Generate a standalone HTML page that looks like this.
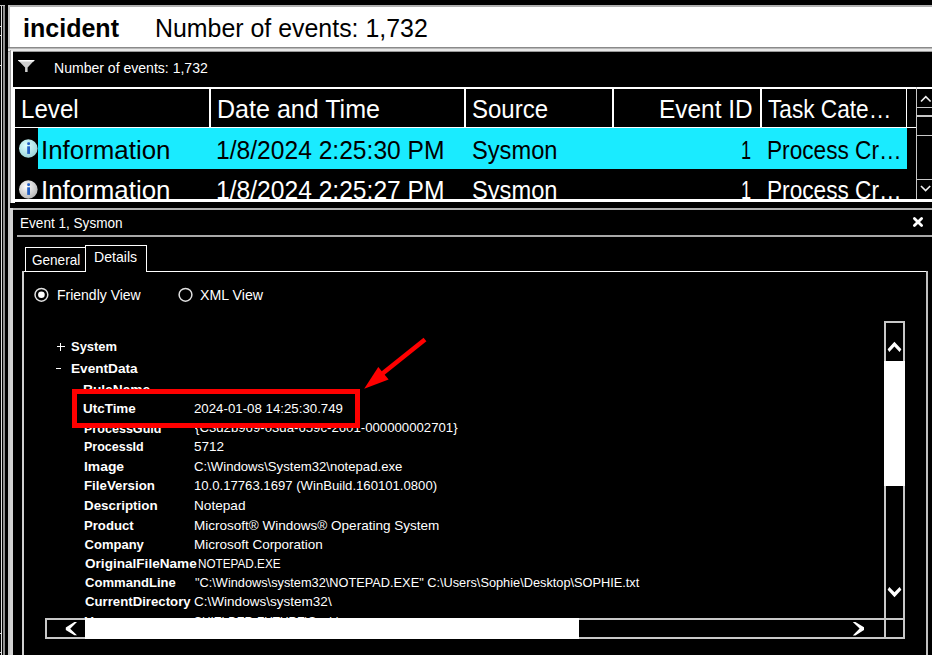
<!DOCTYPE html>
<html><head><meta charset="utf-8"><title>Event Viewer</title>
<style>
html,body{margin:0;padding:0;background:#000;}
body{width:932px;height:655px;overflow:hidden;position:relative;font-family:"Liberation Sans",sans-serif;}
.b{position:absolute;box-sizing:content-box;}
.t{position:absolute;white-space:nowrap;transform-origin:0 0;font-family:"Liberation Sans",sans-serif;}
svg.b{overflow:visible;}
</style></head><body>
<div class="b" style="left:1px;top:5px;width:1px;height:650px;background:#e0e0e0;"></div>
<div class="b" style="left:0px;top:26px;width:2px;height:1px;background:#e0e0e0;"></div>
<div class="b" style="left:0px;top:35px;width:2px;height:1px;background:#e0e0e0;"></div>
<div class="b" style="left:0px;top:65px;width:2px;height:1px;background:#e0e0e0;"></div>
<div class="b" style="left:0px;top:633px;width:2px;height:1px;background:#e0e0e0;"></div>
<div class="b" style="left:0px;top:652px;width:2px;height:1px;background:#e0e0e0;"></div>
<div class="b" style="left:3px;top:5px;width:2px;height:650px;background:#909090;"></div>
<div class="b" style="left:0px;top:5px;width:5px;height:1px;background:#c0c0c0;"></div>
<div class="b" style="left:8px;top:5px;width:924px;height:1.5px;background:#b0b0b0;"></div>
<div class="b" style="left:8px;top:5px;width:2px;height:650px;background:#c4c4c4;"></div>
<div class="b" style="left:9.5px;top:6.5px;width:922.5px;height:40.5px;background:#ffffff;"></div>
<div class="t" style="left:22.87px;top:15.20px;font-size:26px;line-height:26px;font-weight:bold;color:#000;transform:scaleX(0.9633)">incident</div>
<div class="t" style="left:154.61px;top:16.20px;font-size:25px;line-height:25px;font-weight:normal;color:#000;transform:scaleX(0.9963)">Number of events: 1,732</div>
<div class="b" style="left:8px;top:47px;width:924px;height:1px;background:#8a8a8a;"></div>
<div class="b" style="left:8px;top:48px;width:924px;height:1px;background:#b8b8b8;"></div>
<div class="b" style="left:8px;top:49px;width:924px;height:1.5px;background:#e8e8e8;"></div>
<div class="b" style="left:8px;top:50.5px;width:924px;height:1.5px;background:#9a9a9a;"></div>
<div class="b" style="left:10px;top:50px;width:1.3px;height:152.5px;background:#a0a0a0;"></div>
<div class="b" style="left:11.3px;top:50.5px;width:1.9px;height:152px;background:#ffffff;"></div>
<div class="b" style="left:13px;top:86.5px;width:2px;height:116px;background:#ffffff;"></div>
<svg class="b" style="left:17px;top:59px" width="19" height="14" viewBox="0 0 19 14"><path d="M0.9 0.9 H17.7 L10.6 8.6 V12.9 H8.1 V8.6 Z" fill="#cfcfcf"/><path d="M0.9 0.9 H17.7 L16.6 2.6 H2 Z" fill="#ffffff"/></svg>
<div class="t" style="left:54.46px;top:60.20px;font-size:15px;line-height:15px;font-weight:normal;color:#fff;transform:scaleX(0.9362)">Number of events: 1,732</div>
<div class="b" style="left:12px;top:86.5px;width:920px;height:2.3px;background:#ffffff;"></div>
<div class="b" style="left:208.5px;top:87px;width:2px;height:40px;background:#ffffff;"></div>
<div class="b" style="left:463.5px;top:87px;width:2px;height:40px;background:#ffffff;"></div>
<div class="b" style="left:611.5px;top:87px;width:2px;height:40px;background:#ffffff;"></div>
<div class="b" style="left:759.5px;top:87px;width:2px;height:40px;background:#ffffff;"></div>
<div class="b" style="left:905.5px;top:87px;width:1.5px;height:40px;background:#ffffff;"></div>
<div class="b" style="left:13px;top:126.5px;width:903px;height:1.5px;background:#ffffff;"></div>
<div class="b" style="left:38px;top:128px;width:869px;height:40.5px;background:#1aebff;"></div>
<div class="t" style="left:20.77px;top:97.30px;font-size:25px;line-height:25px;font-weight:normal;color:#fff;transform:scaleX(0.9661)">Level</div>
<div class="t" style="left:216.59px;top:97.30px;font-size:25px;line-height:25px;font-weight:normal;color:#fff;transform:scaleX(1.0025)">Date and Time</div>
<div class="t" style="left:471.74px;top:97.30px;font-size:25px;line-height:25px;font-weight:normal;color:#fff;transform:scaleX(0.9597)">Source</div>
<div class="t" style="left:658.55px;top:97.30px;font-size:25px;line-height:25px;font-weight:normal;color:#fff;transform:scaleX(0.9763)">Event ID</div>
<div class="t" style="left:767.50px;top:97.30px;font-size:25px;line-height:25px;font-weight:normal;color:#fff;transform:scaleX(0.9060)">Task Cate…</div>
<div class="t" style="left:40.73px;top:138.00px;font-size:25px;line-height:25px;font-weight:normal;color:#000;transform:scaleX(1.0352)">Information</div>
<div class="t" style="left:216.33px;top:138.00px;font-size:25px;line-height:25px;font-weight:normal;color:#000;transform:scaleX(0.9846)">1/8/2024 2:25:30 PM</div>
<div class="t" style="left:471.75px;top:138.00px;font-size:25px;line-height:25px;font-weight:normal;color:#000;transform:scaleX(0.9466)">Sysmon</div>
<div class="t" style="left:741.05px;top:138.00px;font-size:25px;line-height:25px;font-weight:normal;color:#000;transform:scaleX(0.7273)">1</div>
<div class="t" style="left:766.69px;top:138.00px;font-size:25px;line-height:25px;font-weight:normal;color:#000;transform:scaleX(0.9056)">Process Cr…</div>
<div class="b" style="left:14px;top:169px;width:892px;height:30px;overflow:hidden"><div style="position:absolute;left:-14px;top:-169px;width:932px;height:655px"><div class="t" style="left:40.73px;top:178.20px;font-size:25px;line-height:25px;font-weight:normal;color:#fff;transform:scaleX(1.0352)">Information</div><div class="t" style="left:216.33px;top:178.20px;font-size:25px;line-height:25px;font-weight:normal;color:#fff;transform:scaleX(0.9846)">1/8/2024 2:25:27 PM</div><div class="t" style="left:471.75px;top:178.20px;font-size:25px;line-height:25px;font-weight:normal;color:#fff;transform:scaleX(0.9466)">Sysmon</div><div class="t" style="left:741.05px;top:178.20px;font-size:25px;line-height:25px;font-weight:normal;color:#fff;transform:scaleX(0.7273)">1</div><div class="t" style="left:766.69px;top:178.20px;font-size:25px;line-height:25px;font-weight:normal;color:#fff;transform:scaleX(0.9056)">Process Cr…</div></div></div>
<svg class="b" style="left:19px;top:138.7px" width="19" height="19" viewBox="0 0 19 19"><defs><radialGradient id="g148.2" cx="40%" cy="35%" r="70%"><stop offset="0" stop-color="#dcffff"/><stop offset="1" stop-color="#98d2d6"/></radialGradient></defs><circle cx="9.3" cy="9.5" r="9.3" fill="url(#g148.2)"/><rect x="8.2" y="7.3" width="2.8" height="7.6" fill="#2360c4"/><rect x="8.2" y="3.3" width="2.8" height="2.6" rx="1" fill="#2360c4"/></svg>
<svg class="b" style="left:19px;top:180.0px" width="19" height="19" viewBox="0 0 19 19"><defs><radialGradient id="g189.5" cx="40%" cy="35%" r="70%"><stop offset="0" stop-color="#ffffff"/><stop offset="1" stop-color="#b4b4b4"/></radialGradient></defs><circle cx="9.3" cy="9.5" r="9.3" fill="url(#g189.5)"/><rect x="8.2" y="7.3" width="2.8" height="7.6" fill="#2360c4"/><rect x="8.2" y="3.3" width="2.8" height="2.6" rx="1" fill="#2360c4"/></svg>
<div class="b" style="left:915.5px;top:87px;width:1.5px;height:113px;background:#c8c8c8;"></div>
<div class="b" style="left:917px;top:106.5px;width:15px;height:1.5px;background:#c8c8c8;"></div>
<div class="b" style="left:917px;top:115px;width:15px;height:1.5px;background:#c8c8c8;"></div>
<div class="b" style="left:917px;top:134.5px;width:15px;height:1.5px;background:#c8c8c8;"></div>
<div class="b" style="left:917px;top:178.5px;width:15px;height:1.5px;background:#c8c8c8;"></div>
<svg class="b" style="left:919px;top:94px" width="14" height="10" viewBox="0 0 14 10"><polyline points="2,7.5 6.8,2.6 11.6,7.5" fill="none" stroke="#f0f0f0" stroke-width="1.6"/></svg>
<svg class="b" style="left:919px;top:183px" width="14" height="10" viewBox="0 0 14 10"><polyline points="2,3 6.6,7.6 11.2,3" fill="none" stroke="#f0f0f0" stroke-width="1.6"/></svg>
<div class="b" style="left:12px;top:198.8px;width:920px;height:3.3px;background:#ffffff;"></div>
<div class="b" style="left:12.5px;top:207.6px;width:919.5px;height:2.1px;background:#b0b0b0;"></div>
<div class="b" style="left:10px;top:207.6px;width:2.5px;height:447.4px;background:#d4d4d4;"></div>
<div class="t" style="left:20.10px;top:214.50px;font-size:15px;line-height:15px;font-weight:normal;color:#fff;transform:scaleX(0.9045)">Event 1, Sysmon</div>
<svg class="b" style="left:911px;top:215px" width="14" height="14" viewBox="0 0 14 14"><path d="M3.4 3.4 L10.6 10.6 M10.6 3.4 L3.4 10.6" stroke="#fff" stroke-width="2.8" stroke-linecap="round"/></svg>
<div class="b" style="left:16.5px;top:234.8px;width:915.5px;height:2px;background:#a8a8a8;"></div>
<div class="b" style="left:25px;top:247px;width:60.5px;height:1.2px;background:#ffffff;"></div>
<div class="b" style="left:25px;top:247px;width:1.2px;height:24.5px;background:#ffffff;"></div>
<div class="b" style="left:85px;top:244.8px;width:62px;height:1.2px;background:#ffffff;"></div>
<div class="b" style="left:85px;top:244.8px;width:1.2px;height:27px;background:#ffffff;"></div>
<div class="b" style="left:146px;top:244.8px;width:1.2px;height:27px;background:#ffffff;"></div>
<div class="b" style="left:22px;top:270.8px;width:3px;height:1.2px;background:#ffffff;"></div>
<div class="b" style="left:25px;top:270.5px;width:60.5px;height:1.2px;background:#ffffff;"></div>
<div class="b" style="left:146px;top:270.8px;width:781px;height:1.2px;background:#ffffff;"></div>
<div class="b" style="left:22px;top:270.8px;width:1.7px;height:385px;background:#d0d0d0;"></div>
<div class="b" style="left:926px;top:270.8px;width:1.5px;height:385px;background:#c0c0c0;"></div>
<div class="t" style="left:31.60px;top:251.60px;font-size:15px;line-height:15px;font-weight:normal;color:#fff;transform:scaleX(0.9038)">General</div>
<div class="t" style="left:94.06px;top:248.80px;font-size:15px;line-height:15px;font-weight:normal;color:#fff;transform:scaleX(0.9409)">Details</div>
<svg class="b" style="left:33px;top:286px" width="17" height="17" viewBox="0 0 17 17"><circle cx="8.4" cy="8.8" r="6.4" fill="none" stroke="#e0e0e0" stroke-width="1.5"/><circle cx="8.4" cy="8.8" r="3.3" fill="#fff"/></svg>
<svg class="b" style="left:177px;top:286px" width="17" height="17" viewBox="0 0 17 17"><circle cx="8.5" cy="8.8" r="6.4" fill="none" stroke="#e0e0e0" stroke-width="1.5"/></svg>
<div class="t" style="left:57.07px;top:287.40px;font-size:15px;line-height:15px;font-weight:normal;color:#fff;transform:scaleX(0.9326)">Friendly View</div>
<div class="t" style="left:200.25px;top:287.40px;font-size:15px;line-height:15px;font-weight:normal;color:#fff;transform:scaleX(0.9455)">XML View</div>
<div class="b" style="left:57px;top:346.2px;width:7.5px;height:1.2px;background:#fff"></div><div class="b" style="left:60.2px;top:343px;width:1.2px;height:7.5px;background:#fff"></div>
<div class="b" style="left:56.2px;top:367.7px;width:4.5px;height:1.2px;background:#fff;"></div>
<div class="t" style="left:71.40px;top:340.10px;font-size:13px;line-height:13px;font-weight:bold;color:#fff;transform:scaleX(0.9956)">System</div>
<div class="t" style="left:70.95px;top:361.60px;font-size:13px;line-height:13px;font-weight:bold;color:#fff;transform:scaleX(1.0476)">EventData</div>
<div class="t" style="left:82.94px;top:382.80px;font-size:13px;line-height:13px;font-weight:bold;color:#fff;transform:scaleX(1.0565)">RuleName</div>
<div class="t" style="left:83.27px;top:402.00px;font-size:13px;line-height:13px;font-weight:bold;color:#fff;transform:scaleX(1.0340)">UtcTime</div>
<div class="t" style="left:83.63px;top:421.50px;font-size:13px;line-height:13px;font-weight:bold;color:#fff;transform:scaleX(0.9658)">ProcessGuid</div>
<div class="t" style="left:83.64px;top:440.30px;font-size:13px;line-height:13px;font-weight:bold;color:#fff;transform:scaleX(0.9607)">ProcessId</div>
<div class="t" style="left:83.53px;top:459.50px;font-size:13px;line-height:13px;font-weight:bold;color:#fff;transform:scaleX(1.0667)">Image</div>
<div class="t" style="left:83.58px;top:479.10px;font-size:13px;line-height:13px;font-weight:bold;color:#fff;transform:scaleX(1.0221)">FileVersion</div>
<div class="t" style="left:83.57px;top:499.20px;font-size:13px;line-height:13px;font-weight:bold;color:#fff;transform:scaleX(1.0286)">Description</div>
<div class="t" style="left:83.59px;top:518.60px;font-size:13px;line-height:13px;font-weight:bold;color:#fff;transform:scaleX(1.0104)">Product</div>
<div class="t" style="left:84.60px;top:537.50px;font-size:13px;line-height:13px;font-weight:bold;color:#fff;transform:scaleX(1.0000)">Company</div>
<div class="t" style="left:84.60px;top:557.00px;font-size:13px;line-height:13px;font-weight:bold;color:#fff;transform:scaleX(1.0449)">OriginalFileName</div>
<div class="t" style="left:84.60px;top:575.90px;font-size:13px;line-height:13px;font-weight:bold;color:#fff;transform:scaleX(1.0056)">CommandLine</div>
<div class="t" style="left:84.60px;top:595.30px;font-size:13px;line-height:13px;font-weight:bold;color:#fff;transform:scaleX(1.0154)">CurrentDirectory</div>
<div class="t" style="left:83.53px;top:614.60px;font-size:13px;line-height:13px;font-weight:bold;color:#fff;transform:scaleX(1.0714)">User</div>
<div class="t" style="left:193.58px;top:402.00px;font-size:13px;line-height:13px;font-weight:normal;color:#fff;transform:scaleX(1.0200)">2024-01-08 14:25:30.749</div>
<div class="t" style="left:194.60px;top:421.30px;font-size:13px;line-height:13px;font-weight:normal;color:#fff;transform:scaleX(1.0147)">{C3d2b969-03da-659c-2601-000000002701}</div>
<div class="t" style="left:193.56px;top:440.30px;font-size:13px;line-height:13px;font-weight:normal;color:#fff;transform:scaleX(1.0429)">5712</div>
<div class="t" style="left:193.59px;top:459.50px;font-size:13px;line-height:13px;font-weight:normal;color:#fff;transform:scaleX(1.0117)">C:\Windows\System32\notepad.exe</div>
<div class="t" style="left:193.59px;top:479.10px;font-size:13px;line-height:13px;font-weight:normal;color:#fff;transform:scaleX(1.0100)">10.0.17763.1697 (WinBuild.160101.0800)</div>
<div class="t" style="left:193.85px;top:499.20px;font-size:13px;line-height:13px;font-weight:normal;color:#fff;transform:scaleX(1.0479)">Notepad</div>
<div class="t" style="left:193.56px;top:518.60px;font-size:13px;line-height:13px;font-weight:normal;color:#fff;transform:scaleX(1.0397)">Microsoft® Windows® Operating System</div>
<div class="t" style="left:193.56px;top:537.50px;font-size:13px;line-height:13px;font-weight:normal;color:#fff;transform:scaleX(1.0366)">Microsoft Corporation</div>
<div class="t" style="left:197.70px;top:557.00px;font-size:13px;line-height:13px;font-weight:normal;color:#fff;transform:scaleX(0.9022)">NOTEPAD.EXE</div>
<div class="t" style="left:194.60px;top:575.90px;font-size:13px;line-height:13px;font-weight:normal;color:#fff;transform:scaleX(0.9817)">"C:\Windows\system32\NOTEPAD.EXE" C:\Users\Sophie\Desktop\SOPHIE.txt</div>
<div class="t" style="left:193.56px;top:595.30px;font-size:13px;line-height:13px;font-weight:normal;color:#fff;transform:scaleX(1.0412)">C:\Windows\system32\</div>
<div class="t" style="left:193.69px;top:614.60px;font-size:13px;line-height:13px;font-weight:normal;color:#fff;transform:scaleX(0.9091)">SHIELDER-FUTURE\Sophie</div>
<div class="b" style="left:72px;top:389px;width:278px;height:28.6px;border:5px solid #ff0000"></div>
<svg class="b" style="left:0;top:0" width="932" height="655" viewBox="0 0 932 655"><line x1="382.5" y1="373.5" x2="425" y2="339.5" stroke="#ff0000" stroke-width="4.6"/><polygon points="364.2,388.8 378.3,367 388.6,379.4" fill="#ff0000"/></svg>
<div class="b" style="left:884px;top:321px;width:21px;height:318px;background:#000;"></div>
<div class="b" style="left:884px;top:321px;width:21px;height:2px;background:#c8c8c8;"></div>
<div class="b" style="left:884px;top:321px;width:2px;height:318px;background:#c8c8c8;"></div>
<div class="b" style="left:903px;top:321px;width:2px;height:318px;background:#c8c8c8;"></div>
<div class="b" style="left:884px;top:361px;width:21px;height:125px;background:#ffffff;"></div>
<svg class="b" style="left:884px;top:336px" width="21" height="20" viewBox="0 0 21 20"><polygon points="10.4,5.7 17.4,13.2 15.6,16 10.4,10.6 5.3,16 3.6,13.2" fill="#fff"/></svg>
<svg class="b" style="left:884px;top:583px" width="21" height="20" viewBox="0 0 21 20"><polygon points="10.5,14.2 17.4,6.7 15.6,3.9 10.5,9.3 5.3,3.9 3.6,6.7" fill="#fff"/></svg>
<div class="b" style="left:45px;top:618px;width:860px;height:21px;background:#000;"></div>
<div class="b" style="left:45px;top:618px;width:860px;height:2px;background:#c8c8c8;"></div>
<div class="b" style="left:45px;top:637px;width:860px;height:2px;background:#c8c8c8;"></div>
<div class="b" style="left:45px;top:618px;width:2px;height:21px;background:#c8c8c8;"></div>
<div class="b" style="left:884px;top:618px;width:2px;height:21px;background:#c8c8c8;"></div>
<div class="b" style="left:903px;top:618px;width:2px;height:21px;background:#c8c8c8;"></div>
<div class="b" style="left:85px;top:618px;width:494px;height:21px;background:#ffffff;"></div>
<svg class="b" style="left:60px;top:619px" width="22" height="20" viewBox="0 0 22 20"><polygon points="5.8,8.4 14.4,3 17,3 10.2,9.7 17,16.3 14.4,16.3 5.8,11" fill="#fff"/></svg>
<svg class="b" style="left:848px;top:619px" width="22" height="20" viewBox="0 0 22 20"><polygon points="16,8.3 7.4,3 4.8,3 11.6,9.6 4.8,16.4 7.4,16.4 16,10.9" fill="#fff"/></svg>
</body></html>
